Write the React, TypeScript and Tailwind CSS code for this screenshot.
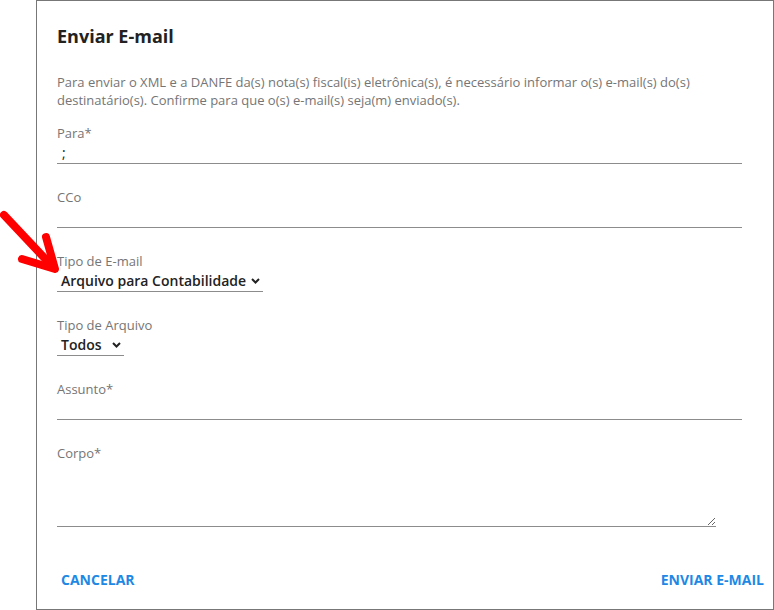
import { useState } from "react";

// Underlined text field with a small grey label on top
const Field = ({ label, value }: { label: string; value?: string }) => (
  <div className="flex flex-col">
    <label className="text-[13px] leading-[18px] text-[#757575]">{label}</label>
    <input
      defaultValue={value}
      className="h-[22px] w-full border-0 border-b border-[#8c8c8c] px-[5px] text-[14px] text-[#222] outline-none"
    />
  </div>
);

// Native-looking select: text, chevron and a bottom rule sized to its content
const SelectField = ({ label, value, gap }: { label: string; value: string; gap: string }) => (
  <div className="flex flex-col items-start">
    <label className="text-[13px] leading-[18px] text-[#757575]">{label}</label>
    <div className="flex h-[22px] items-center border-b border-[#8c8c8c] pl-1 pr-[3px]">
      <span className="text-[14px] font-semibold text-[#222]">{value}</span>
      <svg width="9" height="6" viewBox="0 0 9 6" className={gap}>
        <path d="M1 1l3.5 3.5L8 1" fill="none" stroke="#222" strokeWidth="2" />
      </svg>
    </div>
  </div>
);

const App = () => {
  const [open] = useState<boolean>(true);

  if (!open) return null;

  return (
    <div className="relative h-[610px] w-[774px] bg-white" style={{ fontFamily: '"Open Sans", sans-serif' }}>
      {/* red annotation arrow */}
      <svg className="absolute left-0 top-[205px]" width="70" height="75" viewBox="0 205 70 75">
        <g stroke="#ff0000" strokeWidth="8" strokeLinecap="round" strokeLinejoin="round" fill="none">
          <path d="M4 215 L52 266" />
          <path d="M22 259 L55 269 L46 237" />
        </g>
      </svg>

      <div className="ml-[36px] flex h-[610px] w-[738px] flex-col border border-[#777]">
        <div className="flex flex-col pl-5 pr-[31px]">
          <h2 className="pt-[23px] text-[18px] font-bold leading-6 text-[#222]">Enviar E-mail</h2>
          <p className="mt-[25px] text-[13px] leading-[18px] text-[#757575]">
            Para enviar o XML e a DANFE da(s) nota(s) fiscal(is) eletrônica(s), é necessário informar o(s) e-mail(s) do(s)
            destinatário(s). Confirme para que o(s) e-mail(s) seja(m) enviado(s).
          </p>

          <div className="mt-[15px] flex flex-col gap-6">
            <Field label="Para*" value=";" />
            <Field label="CCo" />
            <SelectField label="Tipo de E-mail" value="Arquivo para Contabilidade" gap="ml-[5px]" />
            <SelectField label="Tipo de Arquivo" value="Todos" gap="ml-[10px]" />
            <Field label="Assunto*" />
            <div className="flex flex-col">
              <label className="text-[13px] leading-[18px] text-[#757575]">Corpo*</label>
              <textarea className="h-[65px] w-[659px] border-0 border-b border-[#8c8c8c] text-[14px] outline-none" />
            </div>
          </div>
        </div>

        <div className="mt-auto mb-[12px] flex items-center justify-between pl-5 pr-[5px]">
          <button className="h-9 px-1 text-[14px] font-bold text-[#1e88e5]">CANCELAR</button>
          <button className="h-9 px-1 text-[14px] font-bold text-[#1e88e5]">ENVIAR E-MAIL</button>
        </div>
      </div>
    </div>
  );
};

export default App;
